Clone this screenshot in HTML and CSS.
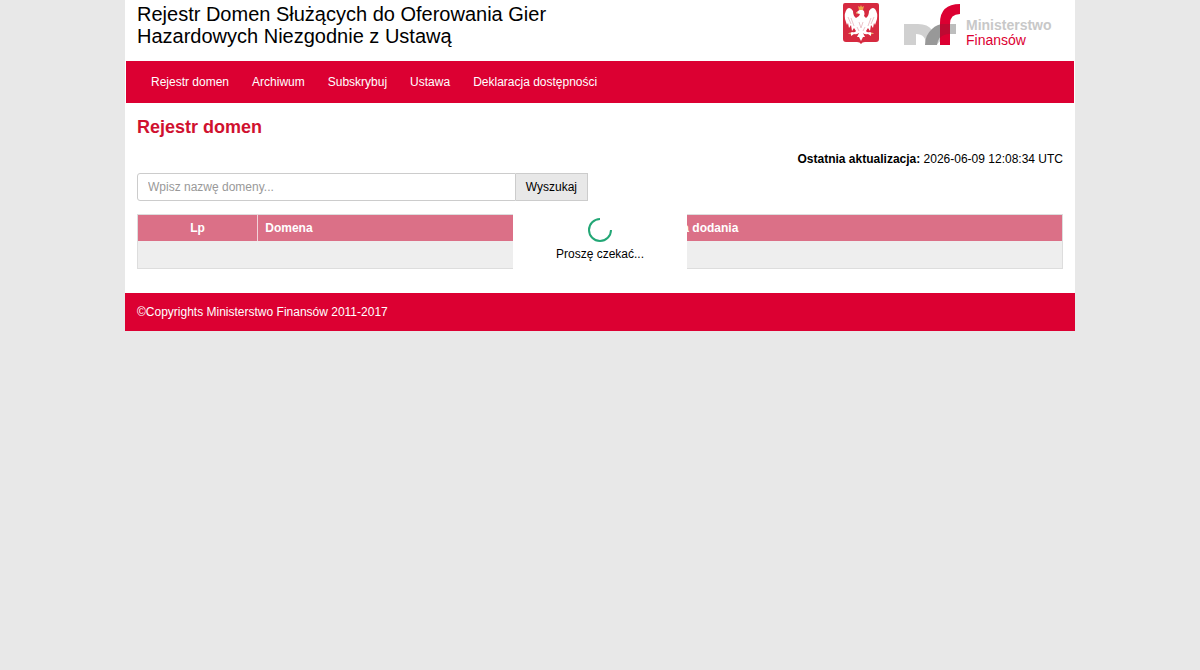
FILE: index.html
```html
<!DOCTYPE html>
<html lang="pl">
<head>
    <meta charset="UTF-8">
    <meta name="viewport" content="width=device-width, initial-scale=1.0">
    <title>Rejestr domen</title>
    <link rel="stylesheet" href="styles.css">
</head>
<body>
    <div class="page">
        <header class="header">
            <h1 class="site-title">Rejestr Domen Służących do Oferowania Gier Hazardowych Niezgodnie z Ustawą</h1>
            <div class="logos">
                <!-- Coat of arms -->
                <svg class="emblem" width="36" height="42" viewBox="0 0 36 42" aria-hidden="true">
                    <path d="M2 0H34Q36 0 36 2V36Q36 39 33 39H22Q19 39 18 41Q17 39 14 39H3Q0 39 0 36V2Q0 0 2 0Z" fill="#d62a40"/>
                    <path d="M15 8Q18 5 21 8Q22 11 21 13L23 15Q26 13 26 8Q29 3 32 6Q35 10 34 16L32 22L31 20L30 25L28 22L27 28L25 25L23 28Q24 30 27 29L31 31L28 31L28 33L25 31Q22 32 20 30L22 34L20 34L18 38L16 34L14 34L16 30Q13 32 11 31L8 33L8 31L5 31L9 29Q12 30 13 28L11 25L9 28L8 22L6 25L5 20L4 22L2 16Q1 10 4 6Q7 3 10 8Q10 13 13 15L16 13L17 11L13 10Z" fill="#fff"/>
                    <path d="M5 14L8 21M8 15L11 23M31 14L28 21M28 15L25 23M16 19L18 25L20 19M14 24L16 28M22 24L20 28" stroke="#ecc4ca" stroke-width="1" fill="none"/>
                    <path d="M15 3L17 4L18 2L19 4L21 3L20 7H16Z" fill="#eda54a"/>
                    <path d="M6 30L8 31M30 30L28 31M13 10H15" stroke="#e9a94b" stroke-width="1"/>
                </svg>
                <!-- Ministry logo -->
                <svg class="ministry" width="158" height="46" viewBox="0 0 158 46" role="img" aria-label="Ministerstwo Finansów">
                    <path d="M0 21H14Q24 21 28 27Q33 21 44 21V31L32 42H22Q22 31 12 31V42H0Z" fill="#d0d0d0"/>
                    <path d="M36 21H52V31H46Z" fill="#bdbdbd"/>
                    <path d="M21 42Q21 32 28 26Q33 21 40 21V31Q34 34 33 42Z" fill="#989898"/>
                    <path d="M36 42V20Q36 1 56 1V11Q46 11 46 21V42Z" fill="#dc0032"/>
                    <path d="M36 21H46V31Q39 31 36 35Z" fill="#bd0a32"/>
                    <text class="ministry-name ministry-top" x="62" y="27">Ministerstwo</text>
                    <text class="ministry-name ministry-bottom" x="62" y="42">Finansów</text>
                </svg>
            </div>
        </header>

        <nav class="nav">
            <a href="#">Rejestr domen</a>
            <a href="#">Archiwum</a>
            <a href="#">Subskrybuj</a>
            <a href="#">Ustawa</a>
            <a href="#">Deklaracja dostępności</a>
        </nav>

        <main class="content">
            <h2 class="section-title">Rejestr domen</h2>
            <p class="updated"><strong>Ostatnia aktualizacja:</strong> 2026-06-09 12:08:34 UTC</p>

            <form class="search">
                <input type="text" class="search-input" placeholder="Wpisz nazwę domeny..." aria-label="Wpisz nazwę domeny">
                <button type="button" class="search-button">Wyszukaj</button>
            </form>

            <div class="table-wrapper">
                <table class="domains">
                    <thead>
                        <tr>
                            <th class="col-lp">Lp</th>
                            <th class="col-domain">Domena</th>
                            <th>Data dodania</th>
                        </tr>
                    </thead>
                    <tbody>
                        <tr>
                            <td colspan="3"></td>
                        </tr>
                    </tbody>
                </table>
                <!-- Shown while the rows are loading -->
                <div class="processing" role="status">
                    <svg class="spinner" width="24" height="24" viewBox="0 0 24 24" aria-hidden="true">
                        <path d="M12 1A11 11 0 1 0 23 12" fill="none" stroke="#23a776" stroke-width="2"/>
                    </svg>
                    <span>Proszę czekać...</span>
                </div>
            </div>
        </main>

        <footer class="footer">©Copyrights Ministerstwo Finansów 2011-2017</footer>
    </div>
</body>
</html>
```

FILE: styles.css
```css
* {
    box-sizing: border-box;
}

body {
    margin: 0;
    background-color: #e8e8e8;
    color: #000;
    font-family: "Liberation Sans", Arial, sans-serif;
    font-size: 12px;
    line-height: 18px;
}

.page {
    max-width: 950px;
    margin: 0 auto;
    background-color: #fff;
}

.header {
    display: flex;
    justify-content: space-between;
    align-items: flex-start;
    padding: 3px 12px 12px;
}

.site-title {
    max-width: 450px;
    margin: 0;
    font-size: 20px;
    font-weight: normal;
    line-height: 22px;
}

.logos {
    display: flex;
    gap: 25px;
    padding-right: 1px;
}

.ministry-name {
    font-size: 14px;
}

.ministry-top {
    fill: #c8c8c8;
    font-weight: bold;
}

.ministry-bottom {
    fill: #dc0032;
}

.nav {
    display: flex;
    flex-wrap: wrap;
    gap: 23px;
    margin: 0 1px;
    padding: 12px 25px;
    background-color: #dc0032;
}

.nav a {
    color: #fff;
    text-decoration: none;
}

.content {
    padding: 14px 12px 24px;
}

.section-title {
    margin: 0;
    color: #d0112f;
    font-size: 18px;
    line-height: 20px;
}

.updated {
    margin: 13px 0 5px;
    text-align: right;
}

.search {
    display: flex;
    width: 50%;
    max-width: 451px;
    margin-bottom: 13px;
}

.search-input {
    flex: 1;
    min-width: 0;
    height: 28px;
    padding: 0 10px;
    border: 1px solid #ccc;
    border-radius: 3px 0 0 3px;
    font: inherit;
}

.search-input::placeholder {
    color: #999;
}

.search-button {
    padding: 0 10px;
    border: 1px solid #ccc;
    border-left: none;
    background-color: #e8e8e8;
    font: inherit;
    cursor: pointer;
}

.table-wrapper {
    position: relative;
}

.domains {
    width: 100%;
    border-collapse: collapse;
    table-layout: fixed;
    border: 1px solid #ddd;
}

.domains th {
    padding: 4px 7px;
    border-right: 1px solid #f3d3da;
    background-color: #db7087;
    color: #fff;
    text-align: left;
}

.domains th:last-child {
    border-right: none;
}

.domains .col-lp {
    width: 13%;
    text-align: center;
}

.domains .col-domain {
    width: 43%;
}

.domains td {
    height: 27px;
    padding: 0;
    background-color: #eee;
}

/* Covers the middle of the table */
.processing {
    position: absolute;
    top: 0;
    bottom: 0;
    left: 50%;
    display: flex;
    flex-direction: column;
    align-items: center;
    gap: 3px;
    width: 174px;
    margin-left: -87px;
    padding-top: 4px;
    background-color: #fff;
}

.footer {
    padding: 10px 12px;
    background-color: #dc0032;
    color: #fff;
}
```
